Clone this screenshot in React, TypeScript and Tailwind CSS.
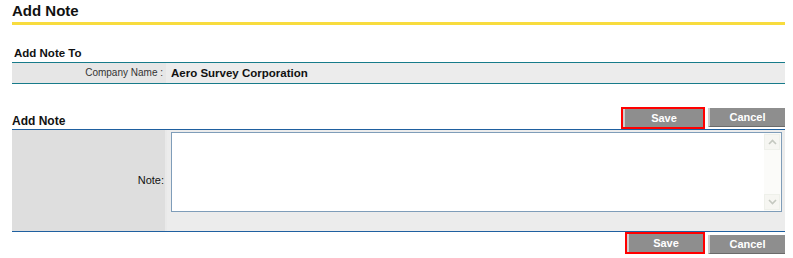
import { useState } from 'react';

const font = { fontFamily: '"Liberation Sans", Arial, sans-serif' };

function ButtonBar({ saveWidth, top }: { saveWidth: string; top: boolean }) {
  return (
    <div className="flex items-end gap-[3px]">
      <div className={`${saveWidth} h-[22px] border-2 border-[#ff0000] flex`}>
        <button className="flex-1 bg-[#8e8e8e] border-l-2 border-l-[#cfcfcf] text-white text-[11px] font-bold leading-none">
          Save
        </button>
      </div>
      <button
        className={`w-[77px] ${top ? 'h-[19px] mb-[2px]' : 'h-[19px]'} bg-[#8e8e8e] border-l-2 border-l-[#cfcfcf] border-b border-b-[#6a6a6a] text-white text-[11px] font-bold leading-none`}
      >
        Cancel
      </button>
    </div>
  );
}

function Chevron({ up }: { up: boolean }) {
  return (
    <svg width="9" height="6" viewBox="0 0 9 6">
      <path
        d={up ? 'M1 5 L4.5 1.5 L8 5' : 'M1 1 L4.5 4.5 L8 1'}
        fill="none"
        stroke="#c4c8c0"
        strokeWidth="1.6"
      />
    </svg>
  );
}

export default function App() {
  const [note, setNote] = useState('');

  return (
    <div className="bg-white w-[793px] h-[258px] pl-3 pr-[8px]" style={font}>
      {/* page title */}
      <div className="pt-[2px] pb-[2px] border-b-[3px] border-[#f8dc3e] text-[15px] font-bold leading-[18px] text-[#111]">
        Add Note
      </div>

      {/* Add Note To */}
      <div className="mt-[21px] pl-[2px] text-[11.5px] font-bold leading-[14px] pb-[2px] text-[#111]">
        Add Note To
      </div>
      <div className="border-t border-b border-[#177b8a] flex h-[22px]">
        <div className="w-[154px] bg-[#e6e6e6] text-right pr-[3px] text-[10px] text-[#333] leading-[20px]">
          Company Name :
        </div>
        <div className="flex-1 bg-[#ececec] pl-[5px] text-[11.5px] font-bold leading-[20px] text-[#111]">
          Aero Survey Corporation
        </div>
      </div>

      {/* Add Note */}
      <div className="mt-[23px] flex items-end justify-between h-[22px]">
        <div className="text-[12px] font-bold leading-[14px] pb-[1px] text-[#111]">Add Note</div>
        <div className="pr-0">
          <ButtonBar saveWidth="w-[84px]" top={true} />
        </div>
      </div>
      <div className="border-t border-b border-[#1f60a0] flex h-[103px]">
        <div className="w-[155px] bg-[#dedede] border-r-2 border-r-[#e9e9e9] flex items-center justify-end pr-[1px] text-[11px] text-[#111]">
          Note:
        </div>
        <div className="flex-1 bg-[#ececec] pt-[2px] pl-[4px] pr-[3px]">
          <div className="h-[80px] border border-[#7f9db9] bg-white flex">
            <textarea
              value={note}
              onChange={(e) => setNote(e.target.value)}
              className="flex-1 resize-none outline-none p-1 text-[12px]"
            />
            <div className="w-[17px] bg-[#fbfbf9] flex flex-col justify-between py-[1px] pr-[1px]">
              <div className="h-[16px] border border-[#eef0ea] bg-[#f6f6f2] flex items-center justify-center">
                <Chevron up={true} />
              </div>
              <div className="h-[16px] border border-[#eef0ea] bg-[#f6f6f2] flex items-center justify-center">
                <Chevron up={false} />
              </div>
            </div>
          </div>
        </div>
      </div>

      <div className="flex justify-end">
        <ButtonBar saveWidth="w-[80px]" top={false} />
      </div>
    </div>
  );
}
